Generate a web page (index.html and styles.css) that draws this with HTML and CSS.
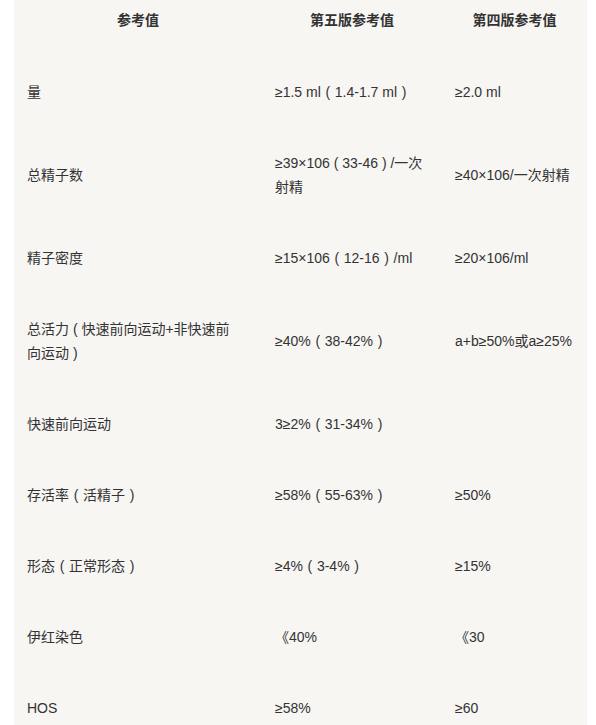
FILE: index.html
```html
<!DOCTYPE html>
<html lang="zh">
<head>
<meta charset="utf-8">
<link rel="stylesheet" href="styles.css">
</head>
<body>
<table class="ref">
  <colgroup>
    <col class="c1"><col class="c2"><col class="c3">
  </colgroup>
  <thead>
    <tr><th>参考值</th><th>第五版参考值</th><th>第四版参考值</th></tr>
  </thead>
  <tbody>
    <tr><td>量</td><td>≥1.5 ml<span class="fp">(</span>1.4-1.7 ml<span class="fp">)</span></td><td>≥2.0 ml</td></tr>
    <tr><td>总精子数</td><td>≥39×106&nbsp;(&nbsp;33-46&nbsp;)&nbsp;/一次射精</td><td>≥40×106/一次射精</td></tr>
    <tr><td>精子密度</td><td>≥15×106<span class="fp">(</span>12-16<span class="fp">)</span>/ml</td><td>≥20×106/ml</td></tr>
    <tr><td class="wrap">总活力&nbsp;(&nbsp;快速前向运动+非快速前向运动&nbsp;)</td><td>≥40%<span class="fp">(</span>38-42%<span class="fp">)</span></td><td>a+b≥50%或a≥25%</td></tr>
    <tr><td>快速前向运动</td><td>3≥2%<span class="fp">(</span>31-34%<span class="fp">)</span></td><td></td></tr>
    <tr><td>存活率<span class="fp">(</span>活精子<span class="fp">)</span></td><td>≥58%<span class="fp">(</span>55-63%<span class="fp">)</span></td><td>≥50%</td></tr>
    <tr><td>形态<span class="fp">(</span>正常形态<span class="fp">)</span></td><td>≥4%<span class="fp">(</span>3-4%<span class="fp">)</span></td><td>≥15%</td></tr>
    <tr><td>伊红染色</td><td>《40%</td><td>《30</td></tr>
    <tr><td>HOS</td><td>≥58%</td><td>≥60</td></tr>
  </tbody>
</table>
</body>
</html>
```
FILE: styles.css
```css
html, body {
  margin: 0;
  padding: 0;
  background: #ffffff;
}
body {
  font-family: "Liberation Sans", "Noto Sans CJK SC", sans-serif;
  font-size: 14px;
  color: #333333;
}
.ref {
  margin-left: 14px;
  width: 573px;
  border-collapse: collapse;
  table-layout: fixed;
  background: #f7f6f3;
}
.c1 { width: 248px; }
.c2 { width: 180px; }
.c3 { width: 145px; }
.ref th, .ref td {
  line-height: 24px;
  vertical-align: middle;
  text-align: left;
  padding: 23.5px 6px 23.5px 13px;
}
.ref td.wrap {
  padding-right: 20px;
}
.ref th {
  font-weight: bold;
  text-align: center;
  padding: 8px 0 24.5px 0;
}
.fp {
  padding: 0 4.67px;
}
```
